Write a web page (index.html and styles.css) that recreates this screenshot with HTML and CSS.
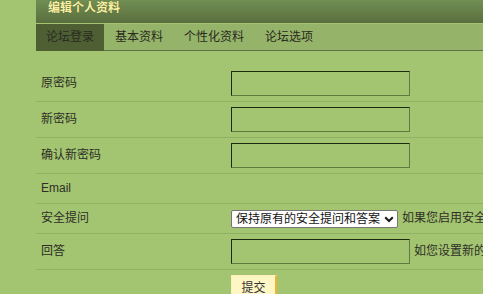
FILE: index.html
```html
<!DOCTYPE html>
<html lang="zh-CN">
<head>
<meta charset="utf-8">
<title>编辑个人资料</title>
<link rel="stylesheet" href="styles.css">
</head>
<body>
<div class="panel">
  <div class="panel-head">编辑个人资料</div>
  <div class="tabs">
    <span class="tab active">论坛登录</span>
    <span class="tab">基本资料</span>
    <span class="tab">个性化资料</span>
    <span class="tab">论坛选项</span>
  </div>
  <form class="form">
    <div class="row">
      <div class="cell label">原密码</div>
      <div class="cell"><input class="text" type="password"></div>
    </div>
    <div class="row">
      <div class="cell label">新密码</div>
      <div class="cell"><input class="text" type="password"></div>
    </div>
    <div class="row">
      <div class="cell label">确认新密码</div>
      <div class="cell"><input class="text" type="password"></div>
    </div>
    <div class="row">
      <div class="cell label">Email</div>
      <div class="cell"></div>
    </div>
    <div class="row">
      <div class="cell label">安全提问</div>
      <div class="cell">
        <span class="sel-wrap">
          <select class="sel"><option>保持原有的安全提问和答案</option></select>
          <svg class="chev" width="10" height="7" viewBox="0 0 10 7" aria-hidden="true"><path d="M1.2 1.2 L5 5 L8.8 1.2" fill="none" stroke="#1a1a1a" stroke-width="2"/></svg>
        </span>
        <span class="hint">如果您启用安全提问，登录时需填入相应的项目才能登录</span>
      </div>
    </div>
    <div class="row">
      <div class="cell label">回答</div>
      <div class="cell">
        <input class="text" type="text">
        <span class="hint">如您设置新的安全提问，请在此输入答案</span>
      </div>
    </div>
    <div class="row last">
      <div class="cell label"></div>
      <div class="cell"><button class="btn" type="button">提交</button></div>
    </div>
  </form>
</div>
</body>
</html>
```

FILE: styles.css
```css
html {
  overflow: hidden;
  background: #a3c571;
}
body {
  margin: 0;
  font-family: "Liberation Sans", "Noto Sans CJK SC", sans-serif;
  font-size: 12px;
  color: #2a2a22;
  background: #a3c571;
}
.panel {
  margin-left: 36px;
  width: 760px;
}
.panel-head {
  height: 23px;
  line-height: 16px;
  padding-left: 12px;
  font-weight: bold;
  color: #fbf0a2;
  text-shadow: 0 0 1px #4b5d32;
  background: linear-gradient(#718e53, #5a6e3f);
}
.tabs {
  margin-top: 1px;
  display: flex;
  background: #95b46a;
  border-bottom: 1px solid #5e7046;
}
.tab {
  height: 26px;
  line-height: 26px;
  padding: 0 10px;
  margin-bottom: -1px;
  margin-right: 1px;
  color: #2a2a20;
  border-bottom: 1px solid #5e7046;
}
.tab.active {
  background: #4e5f34;
  border-bottom-color: #4e5f34;
}
.form {
  margin: 15px 0 0;
}
.row {
  display: grid;
  grid-template-columns: 190px 1fr;
  border-bottom: 1px solid #90b062;
}
.row.last {
  border-bottom: 0;
}
.cell {
  padding: 5px;
  line-height: 19px;
  display: flex;
  align-items: center;
  gap: 4px;
  white-space: nowrap;
}
.label {
  color: #2e2e26;
}
.text {
  box-sizing: border-box;
  width: 179px;
  height: 25px;
  margin: 0;
  padding: 0 3px;
  background: transparent;
  border: 1px solid;
  border-color: #1d2a10 #5e7a3c #5e7a3c #1d2a10;
}
.sel-wrap {
  position: relative;
  display: block;
  height: 18px;
}
.sel {
  appearance: none;
  -webkit-appearance: none;
  box-sizing: border-box;
  display: block;
  width: 167px;
  height: 18px;
  margin: 0;
  padding: 0 0 0 4px;
  font-family: "Liberation Sans", "Noto Sans CJK SC", sans-serif;
  font-size: 12px;
  line-height: 16px;
  color: #111;
  background: #fff;
  border: 1px solid #767676;
  border-radius: 2px;
}
.chev {
  position: absolute;
  left: 153px;
  top: 6px;
  pointer-events: none;
}
.hint {
  color: #2e2e26;
}
.btn {
  box-sizing: border-box;
  width: 46px;
  height: 24px;
  margin: 0;
  padding: 0;
  font-family: "Liberation Sans", "Noto Sans CJK SC", sans-serif;
  font-size: 12px;
  color: #333;
  background: #fff6c6;
  border: 1px solid #fff0b8;
  border-right: 2px solid #f1b232;
  border-bottom: 2px solid #f1b232;
}
```
